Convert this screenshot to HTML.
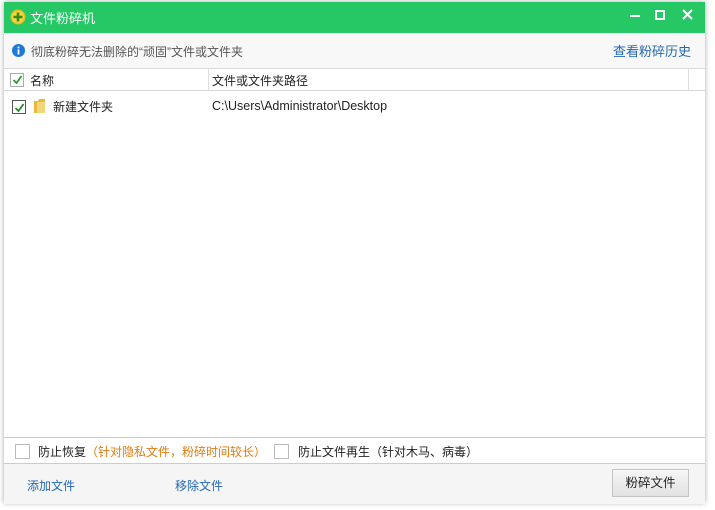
<!DOCTYPE html>
<html><head><meta charset="utf-8"><style>
body{margin:0;width:715px;height:510px;background:#fff;font-family:"Liberation Sans","Noto Sans CJK SC",sans-serif;font-size:12px;color:#222;position:relative;overflow:hidden}
.win{position:absolute;left:4px;top:2px;width:701px;height:501px;background:#fff;box-shadow:0 0 5px rgba(0,0,0,.35)}
.title{position:absolute;left:0;top:0;width:701px;height:31px;background:#25c864;color:#fff;font-size:13px}
.a{position:absolute;white-space:nowrap}
.info{position:absolute;left:0;top:31px;width:701px;height:35px;background:#f8f8f8}
.hdr{position:absolute;left:0;top:66px;width:701px;height:21px;background:#fff;border-top:1px solid #d8d8d8;border-bottom:1px solid #d8d8d8}
.cb{position:absolute;width:12px;height:12px;border:1px solid #999;background:#fff}
.opt{position:absolute;left:0;top:435px;width:701px;height:26px;border-top:1px solid #ccc;background:#fff}
.bot{position:absolute;left:0;top:461px;width:701px;height:40px;border-top:1px solid #ccc;background:#f5f5f5}
.blue{color:#2468b0}
</style></head><body>
<div class="win">
<div class="title">
 <svg class="a" style="left:6px;top:7px" width="16" height="16"><circle cx="8" cy="8" r="7.5" fill="#e8c21a"/><circle cx="8" cy="8" r="6" fill="#f3d640"/><path d="M8 3.5v9M3.5 8h9" stroke="#3a8a1a" stroke-width="2.6"/></svg>
 <span class="a" style="left:26px;top:6px">文件粉碎机</span>
 <div class="a" style="left:626px;top:13px;width:10px;height:2px;background:#fff"></div>
 <div class="a" style="left:651px;top:8px;width:6px;height:6px;border:2px solid #fff"></div>
 <svg class="a" style="left:678px;top:7px" width="11" height="11"><path d="M1 1L10 10M10 1L1 10" stroke="#fff" stroke-width="2"/></svg>
</div>
<div class="info">
 <svg class="a" style="left:8px;top:11px" width="13" height="13"><circle cx="6.5" cy="6.5" r="6.5" fill="#1f7ad6"/><rect x="5.6" y="5.5" width="1.8" height="5" fill="#fff"/><rect x="5.6" y="2.6" width="1.8" height="1.8" fill="#fff"/></svg>
 <span class="a" style="left:27px;top:10px;color:#555">彻底粉碎无法删除的“顽固”文件或文件夹</span>
 <span class="a blue" style="left:609px;top:8px;font-size:13px">查看粉碎历史</span>
</div>
<div class="hdr">
 <div class="cb" style="left:6px;top:4px;border-color:#aaa"></div>
 <svg class="a" style="left:8px;top:5px" width="11" height="11"><path d="M1.5 6l3 3 5-7" stroke="#2a9a2a" stroke-width="1.8" fill="none"/></svg>
 <span class="a" style="left:26px;top:3px">名称</span>
 <div class="a" style="left:204px;top:0;width:1px;height:21px;background:#ddd"></div>
 <span class="a" style="left:208px;top:3px">文件或文件夹路径</span>
 <div class="a" style="left:684px;top:0;width:1px;height:21px;background:#ddd"></div>
</div>
<div class="cb" style="left:8px;top:98px;border-color:#555"></div>
<svg class="a" style="left:10px;top:100px" width="11" height="11"><path d="M1.5 6l3 3 5-7" stroke="#2a8a2a" stroke-width="1.8" fill="none"/></svg>
<svg class="a" style="left:29px;top:96px" width="14" height="16"><path d="M1 3h4l1-2h6v14H1z" fill="#e4bb3c"/><path d="M4 4h8v11H4z" fill="#f4d67a"/></svg>
<span class="a" style="left:49px;top:96px">新建文件夹</span>
<span class="a" style="left:208px;top:97px;font-size:12.5px">C:\Users\Administrator\Desktop</span>
<div class="opt">
 <div class="cb" style="left:11px;top:6px;border-color:#bbb;width:13px;height:13px"></div>
 <span class="a" style="left:34px;top:5px">防止恢复<span style="color:#e07b10">（针对隐私文件，粉碎时间较长）</span></span>
 <div class="cb" style="left:270px;top:6px;border-color:#bbb;width:13px;height:13px"></div>
 <span class="a" style="left:294px;top:5px">防止文件再生（针对木马、病毒）</span>
</div>
<div class="bot">
 <span class="a blue" style="left:23px;top:13px">添加文件</span>
 <span class="a blue" style="left:171px;top:13px">移除文件</span>
 <div class="a" style="left:608px;top:5px;width:75px;height:26px;border:1px solid #c4c4c4;background:linear-gradient(#f6f6f6,#e2e2e2);text-align:center;line-height:26px;font-size:12.5px">粉碎文件</div>
</div>
</div>
</body></html>
